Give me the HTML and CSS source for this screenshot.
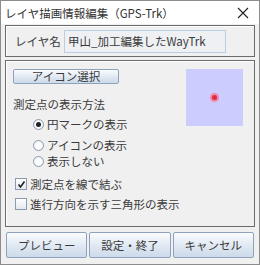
FILE: index.html
```html
<!DOCTYPE html>
<html lang="ja">
  <head>
    <meta charset="UTF-8" />
    <title>レイヤ描画情報編集</title>
    <link rel="stylesheet" href="styles.css">
  </head>
  <body>
    <div class="window">
      <div class="titlebar">
        <span class="title">レイヤ描画情報編集（GPS-Trk）</span>
        <svg class="close" width="12" height="12" viewBox="0 0 12 12">
          <path d="M1 1 L11 11 M11 1 L1 11" stroke="#222" stroke-width="1.1" fill="none" />
        </svg>
      </div>

      <div class="panel name-panel">
        <span class="label">レイヤ名</span>
        <div class="field">甲山_加工編集したWayTrk</div>
      </div>

      <div class="panel main-panel">
        <div class="top-row">
          <div class="left">
            <button class="btn small">アイコン選択</button>
            <div class="heading">測定点の表示方法</div>
            <div class="radios">
              <div class="row first"><span class="radio checked"></span>円マークの表示</div>
              <div class="row"><span class="radio"></span>アイコンの表示</div>
              <div class="row"><span class="radio"></span>表示しない</div>
            </div>
          </div>
          <div class="preview">
            <span class="dot"></span>
          </div>
        </div>
        <div class="checks">
          <div class="row"><span class="check on">
            <svg width="9" height="9" viewBox="0 0 9 9"><path d="M1.5 4.5 L3.5 7 L7.5 1.5" stroke="#222" stroke-width="1.6" fill="none" /></svg>
          </span>測定点を線で結ぶ</div>
          <div class="row"><span class="check"></span>進行方向を示す三角形の表示</div>
        </div>
      </div>

      <div class="buttons">
        <button class="btn big">プレビュー</button>
        <button class="btn big">設定・終了</button>
        <button class="btn big">キャンセル</button>
      </div>
    </div>
  </body>
</html>
```

FILE: styles.css
```css
body {
  margin: 0;
  font-family: "Noto Sans CJK JP", "DejaVu Sans", sans-serif;
  font-size: 11.5px;
  color: #3a3a3a;
  background: #fff;
}
.window {
  width: 260px;
  height: 265px;
  box-sizing: border-box;
  border: 1px solid #8c8c8c;
  background: #f0f0f0;
  display: flex;
  flex-direction: column;
}
.titlebar {
  height: 23px;
  background: #fff;
  display: flex;
  align-items: center;
  justify-content: space-between;
  padding: 0 10px 0 4px;
  flex-shrink: 0;
}
.title {
  font-size: 11.5px;
  color: #333;
}
.panel {
  margin: 0 4px;
  border: 1px solid #6b6b6b;
  box-shadow: inset 1px 1px 0 #fff;
}
.name-panel {
  margin-top: 1px;
  height: 32px;
  box-sizing: border-box;
  display: flex;
  align-items: center;
  padding: 0 0 0 9px;
}
.label {
  width: 49px;
}
.field {
  width: 162px;
  height: 23px;
  box-sizing: border-box;
  border: 1px solid #b9cfe3;
  background: #eef0f3;
  padding-left: 3px;
  line-height: 21px;
}
.main-panel {
  margin-top: 3px;
  height: 167px;
  box-sizing: border-box;
  padding: 7px 0 0 7px;
}
.top-row {
  display: flex;
  justify-content: space-between;
}
.btn {
  font-family: inherit;
  color: #3a3a3a;
  border: 1px solid #8ea3bb;
  border-radius: 2px;
  background: linear-gradient(#fbfcfe, #dfe8f2 55%, #ccdaea);
  padding: 0;
}
.btn.small {
  width: 106px;
  height: 15px;
  font-size: 11.5px;
  line-height: 13px;
}
.heading {
  margin-top: 12px;
  line-height: 16px;
}
.radios {
  padding-left: 20px;
}
.row {
  display: flex;
  align-items: center;
  height: 16px;
}
.radios .first {
  margin-top: 4px;
  margin-bottom: 5px;
}
.radio {
  width: 9px;
  height: 9px;
  border: 1px solid #8a9bb0;
  border-radius: 50%;
  background: radial-gradient(circle, #fff 40%, #dde5ee);
  margin-right: 3px;
  position: relative;
}
.radio.checked::after {
  content: "";
  position: absolute;
  left: 2px;
  top: 2px;
  width: 5px;
  height: 5px;
  border-radius: 50%;
  background: #222;
}
.preview {
  width: 57px;
  height: 57px;
  background: #ccccff;
  margin: 1px 11px 0 0;
  display: flex;
  align-items: center;
  justify-content: center;
}
.dot {
  width: 5px;
  height: 5px;
  border-radius: 50%;
  background: #e02a4a;
  box-shadow: 0 0 0 2px #f08aa8;
}
.checks {
  margin-top: 5px;
  padding-left: 2px;
}
.checks .row {
  height: 20px;
}
.check {
  width: 10px;
  height: 10px;
  border: 1px solid #8a9bb0;
  background: linear-gradient(#fff, #e3e9f0);
  margin-right: 3px;
  display: flex;
  align-items: center;
  justify-content: center;
}
.buttons {
  display: flex;
  gap: 2px;
  margin: 5px 5px 0 5px;
}
.btn.big {
  flex: 1;
  height: 26px;
  font-size: 11.5px;
}
```
